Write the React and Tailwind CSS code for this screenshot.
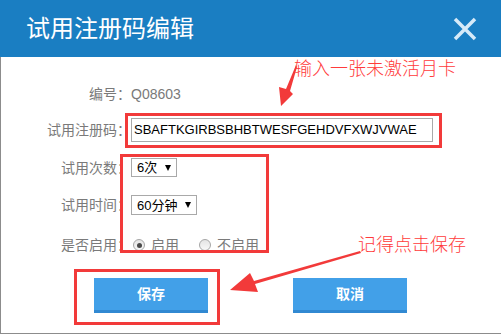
import React from 'react';

const font = "font-['Liberation_Sans','Noto_Sans_CJK_SC',sans-serif]";

const Row = ({ label, className = '', children }) => (
  <div className={`flex items-center ${className}`}>
    <span className="w-[130px] shrink-0 text-right text-[14px] text-[#7a7a7a] leading-none">{label}</span>
    {children}
  </div>
);

const Select = ({ value, width }) => (
  <div className={`flex items-center justify-between h-full border border-[#a9a9a9] bg-white pl-[5px] pr-[5px] text-[13px] text-black leading-none ${width}`}>
    <span>{value}</span>
    <svg width="6" height="6" viewBox="0 0 6 6">
      <polygon points="0,0 6,0 3,6" fill="#000" />
    </svg>
  </div>
);

const Radio = ({ checked, label }) => (
  <label className="flex items-center gap-[6px]">
    <span className="flex h-[12px] w-[12px] items-center justify-center rounded-full border border-[#a6a6a6] bg-gradient-to-b from-[#e4e4e4] to-[#f8f8f8]">
      {checked && <span className="h-[5px] w-[5px] rounded-full bg-[#4a4a4a]" />}
    </span>
    <span className="text-[14px] text-[#7a7a7a] leading-none">{label}</span>
  </label>
);

const Button = ({ children }) => (
  <button className="h-[35px] w-[114px] bg-[#42a0e8] border-b-[3px] border-[#3189d2] text-[14px] font-bold text-white">
    {children}
  </button>
);

export default function App() {
  return (
    <div className={`relative w-[501px] h-[335px] overflow-hidden bg-white ${font}`}>
      {/* Title bar */}
      <div className="flex h-[57px] items-center justify-between bg-[#1a7ec2] pl-[26px] pr-[24px]">
        <h1 className="text-[24px] font-normal text-white leading-none">试用注册码编辑</h1>
        <svg width="24" height="24" viewBox="0 0 24 24">
          <path d="M2 2 L22 22 M22 2 L2 22" stroke="#d6eaf8" strokeWidth="3.5" />
        </svg>
      </div>

      {/* Form */}
      <div className="flex h-[277px] flex-col border-l border-b border-[#8c8c8c]">
        <Row label="编号：" className="mt-[27px] h-[20px]">
          <span className="text-[14px] text-[#7a7a7a] leading-none">Q08603</span>
        </Row>
        <Row label="试用注册码：" className="mt-[14px] h-[24px]">
          <div className="flex h-full w-[302px] items-center border border-[#a9a9a9] pl-[2px] text-[13px] text-black">
            SBAFTKGIRBSBHBTWESFGEHDVFXWJVWAE
          </div>
        </Row>
        <Row label="试用次数：" className="mt-[16px] h-[19px]">
          <Select value="6次" width="w-[46px]" />
        </Row>
        <Row label="试用时间：" className="mt-[18px] h-[20px]">
          <Select value="60分钟" width="w-[66px]" />
        </Row>
        <Row label="是否启用：" className="mt-[20px] h-[20px]">
          <div className="ml-[2px] flex items-center gap-[20px]">
            <Radio checked label="启用" />
            <Radio label="不启用" />
          </div>
        </Row>
        <div className="mt-[23px] flex gap-[85px] pl-[93px]">
          <Button>保存</Button>
          <Button>取消</Button>
        </div>
      </div>

      {/* Annotation boxes */}
      <div className="pointer-events-none absolute left-[125px] top-[113px] h-[35px] w-[317px] border-[3px] border-[#f23a3a]" />
      <div className="pointer-events-none absolute left-[120px] top-[154px] h-[99px] w-[149px] border-[3px] border-[#f23a3a]" />
      <div className="pointer-events-none absolute left-[74px] top-[269px] h-[56px] w-[146px] border-[3px] border-[#f23a3a]" />

      {/* Annotation notes */}
      <span className="absolute left-[294px] top-[60px] text-[18px] font-light leading-none text-[#ff3b3b]">输入一张未激活月卡</span>
      <span className="absolute left-[358px] top-[236px] text-[18px] font-light leading-none text-[#ff3b3b]">记得点击保存</span>

      <svg className="pointer-events-none absolute left-0 top-0" width="501" height="335">
        <polygon points="296,65 297,67 290,91 293,94 281,106 279,87 286,89" fill="#f23a3a" />
        <polygon points="360,251 361,253 255,284 258,292 230,290 250,273 254,281" fill="#f23a3a" />
      </svg>
    </div>
  );
}
